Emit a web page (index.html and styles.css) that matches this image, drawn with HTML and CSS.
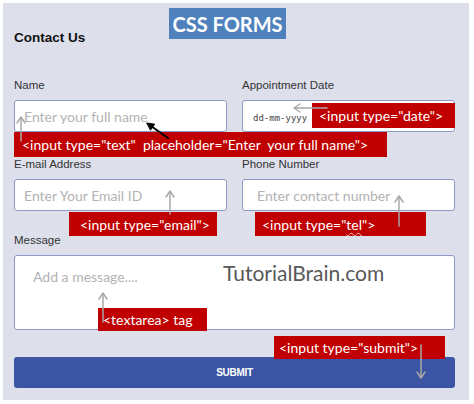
FILE: index.html
```html
<!DOCTYPE html>
<html lang="en">
<head>
<meta charset="utf-8">
<title>CSS Forms</title>
<link rel="stylesheet" href="styles.css">
</head>
<body>
<div class="sheet">
  <form class="panel" onsubmit="return false">
    <h2 class="heading">Contact Us</h2>

    <div class="row row-top">
      <div class="group">
        <label class="label" for="name">Name</label>
        <input class="field" id="name" type="text" placeholder="Enter your full name">
      </div>
      <div class="group">
        <label class="label" for="date">Appointment Date</label>
        <input class="field field-date" id="date" type="text" value="dd-mm-yyyy" readonly>
      </div>
    </div>

    <div class="row row-mid">
      <div class="group">
        <label class="label" for="email">E-mail Address</label>
        <input class="field" id="email" type="email" placeholder="Enter Your Email ID">
      </div>
      <div class="group">
        <label class="label" for="phone">Phone Number</label>
        <input class="field field-phone" id="phone" type="tel" placeholder="Enter contact number">
      </div>
    </div>

    <div class="group group-message">
      <label class="label" for="message">Message</label>
      <textarea class="area" id="message" placeholder="Add a message...."></textarea>
    </div>

    <button class="submit" type="submit">SUBMIT</button>
  </form>

  <!-- callouts laid over the form -->
  <div class="notes">
    <div class="title">CSS FORMS</div>
    <div class="brand">TutorialBrain.com</div>

    <div class="tag tag-text">&lt;input type="text"&nbsp; placeholder="Enter&nbsp; your full name"&gt;</div>
    <div class="tag tag-date">&lt;input type="date"&gt;</div>
    <div class="tag tag-email">&lt;input type="email"&gt;</div>
    <div class="tag tag-tel">&lt;input type="<span class="squiggle">tel</span>"&gt;</div>
    <div class="tag tag-area">&lt;textarea&gt; tag</div>
    <div class="tag tag-submit">&lt;input type="submit"&gt;</div>

    <svg class="arrows" width="474" height="404" viewBox="0 0 474 404">
      <g fill="none" stroke="#a8a8a8" stroke-width="1.5" stroke-linecap="round" stroke-linejoin="round">
        <!-- name placeholder -->
        <line x1="21" y1="141" x2="21" y2="118"/>
        <polyline points="17,123 21,117 25,123"/>
        <!-- date -->
        <line x1="327" y1="108" x2="295" y2="108"/>
        <polyline points="300,104 294,108 300,112"/>
        <!-- email -->
        <line x1="170" y1="214" x2="170" y2="192"/>
        <polyline points="166,197 170,191 174,197"/>
        <!-- phone -->
        <line x1="399" y1="226" x2="399" y2="197"/>
        <polyline points="395,202 399,196 403,202"/>
        <!-- textarea -->
        <line x1="103" y1="322" x2="103" y2="294"/>
        <polyline points="99,299 103,293 107,299"/>
        <!-- submit -->
        <line x1="421" y1="345" x2="421" y2="377"/>
        <polyline points="417,372 421,378 425,372"/>
      </g>
      <g stroke="#000" fill="#000" stroke-width="2" stroke-linecap="round">
        <line x1="168" y1="138" x2="151" y2="126"/>
        <polygon points="147,123 154.7,124.2 150.7,129.9" stroke-width="1"/>
      </g>
    </svg>
  </div>
</div>
</body>
</html>
```

FILE: styles.css
```css
html, body {
  margin: 0;
  padding: 0;
  background: #ffffff;
}

.sheet {
  position: relative;
  width: 474px;
  height: 404px;
  overflow: hidden;
}

/* form card */
.panel {
  box-sizing: border-box;
  width: 466px;
  height: 397px;
  margin: 3px;
  padding: 27px 14px 0 11px;
  background: #dde0eb;
  display: flex;
  flex-direction: column;
  font-family: "Liberation Sans", Arial, sans-serif;
}

.heading {
  margin: 0 0 32px;
  font-size: 13.5px;
  line-height: 16px;
  font-weight: bold;
  color: #111111;
}

.row {
  display: grid;
  grid-template-columns: 213px 213px;
  column-gap: 15px;
}

.row-top { margin-bottom: 25px; }
.row-mid { margin-bottom: 22px; }

.group {
  display: flex;
  flex-direction: column;
  gap: 8px;
}

.group-message { margin-bottom: 27px; }

.label {
  font-size: 11.5px;
  line-height: 14px;
  color: #333333;
}

.field,
.area {
  box-sizing: border-box;
  margin: 0;
  border: 1px solid #8d98c6;
  border-radius: 3px;
  background: #ffffff;
  font-family: Lato, "Open Sans", sans-serif;
  font-size: 14px;
  color: #333333;
  outline: none;
}

.field {
  height: 32px;
  padding: 0 9px;
}

.field-phone { padding-left: 14px; }

.field-date {
  padding-left: 10px;
  padding-top: 3px;
  font-family: "DejaVu Sans Mono", monospace;
  font-size: 9px;
  color: #444444;
}

.area {
  height: 75px;
  padding: 12px 18px;
  resize: none;
}

.field::placeholder,
.area::placeholder {
  color: #b3b3b3;
  opacity: 1;
}

.submit {
  height: 31px;
  margin: 0;
  border: 0;
  border-radius: 3px;
  background: #3b55a4;
  color: #ffffff;
  font-family: "Liberation Sans", Arial, sans-serif;
  font-size: 10px;
  font-weight: bold;
  letter-spacing: -0.3px;
}

/* callout layer */
.notes {
  position: absolute;
  inset: 0;
  pointer-events: none;
  font-family: Lato, "Open Sans", sans-serif;
}

.title {
  position: absolute;
  left: 169px;
  top: 8px;
  width: 117px;
  height: 31px;
  display: flex;
  align-items: center;
  justify-content: center;
  background: #4f81bd;
  color: #ffffff;
  font-size: 20px;
  font-weight: bold;
}

.brand {
  position: absolute;
  left: 223px;
  top: 260px;
  font-size: 21px;
  line-height: 26px;
  color: #595959;
}

.tag {
  position: absolute;
  box-sizing: border-box;
  height: 24px;
  display: flex;
  align-items: center;
  background: #c00000;
  color: #ffffff;
  font-size: 14px;
  white-space: nowrap;
}

.tag-text   { left: 14px;  top: 132px; width: 373px; height: 25px; padding-left: 8px; }
.tag-date   { left: 312px; top: 103px; width: 143px; height: 25px; padding-left: 7px; }
.tag-email  { left: 69px;  top: 212px; width: 148px; padding-left: 11px; }
.tag-tel    { left: 255px; top: 212px; width: 171px; padding-left: 7px; }
.tag-area   { left: 98px;  top: 308px; width: 109px; height: 23px; padding-left: 5px; }
.tag-submit { left: 274px; top: 336px; width: 171px; height: 23px; padding-left: 5px; }

.squiggle {
  text-decoration: underline wavy rgba(255, 255, 255, 0.75);
  text-decoration-thickness: 1px;
  text-underline-offset: 2px;
}

.arrows {
  position: absolute;
  left: 0;
  top: 0;
}
```
